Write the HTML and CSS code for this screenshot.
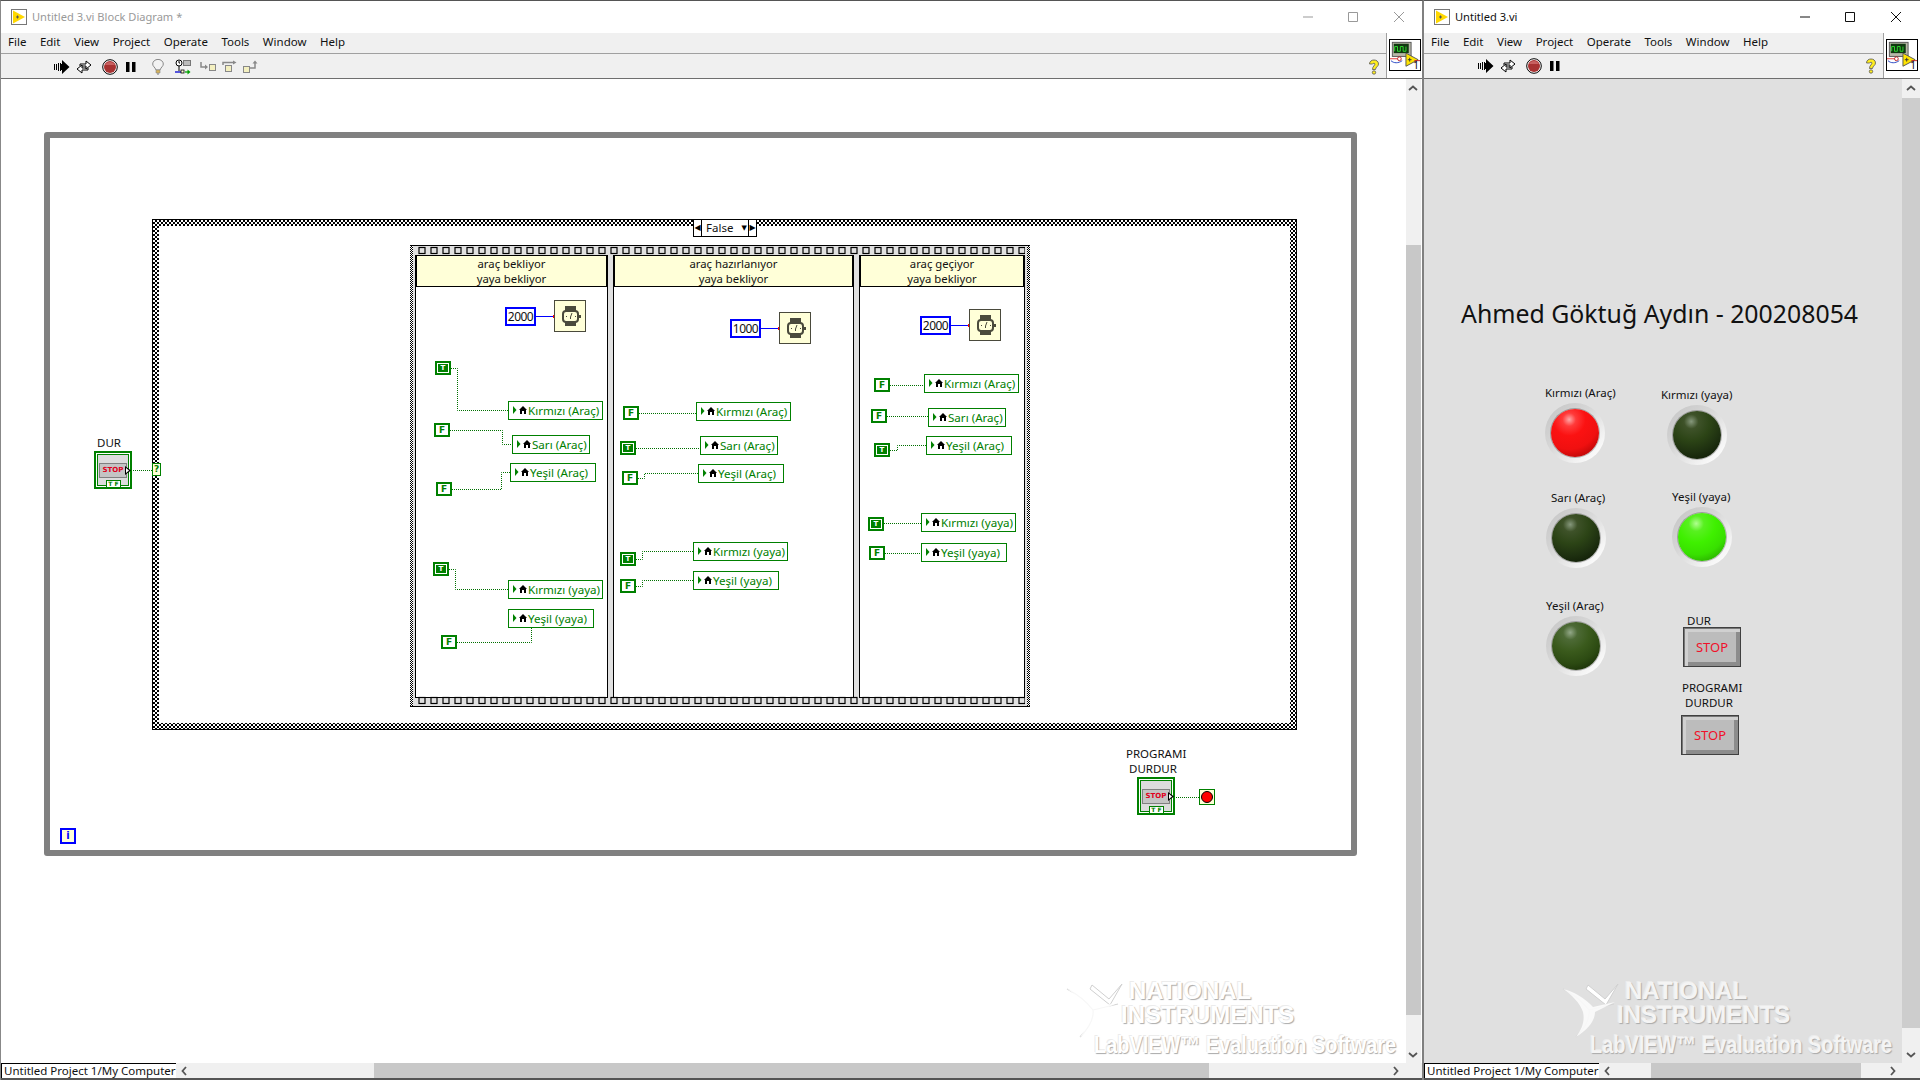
FILE: index.html
```html
<!DOCTYPE html>
<html lang="tr">
<head>
<meta charset="utf-8">
<title>Untitled 3.vi</title>
<link rel="stylesheet" href="styles.css">
</head>
<body>
<svg class="defs" width="0" height="0">
  <defs>
    <symbol id="vi" viewBox="0 0 16 16"><rect x=".5" y=".5" width="15" height="15" fill="#fff" stroke="#777"/><path d="M2 1.5v13l12-6.5z" fill="#ffd800"/><path d="M5 8h3M6.500 6.500v3" stroke="#555" fill="none"/></symbol>
    <symbol id="run" viewBox="0 0 16 16"><path d="M0 5h1v6H0zM2 5h1v6H2zM4 4h1v8H4zM6 4h1v8H6z" fill="#000"/><path d="M7 5h1V1l7.500 7L8 15v-4H7z" fill="#000"/></symbol>
    <symbol id="loop" viewBox="0 0 16 16"><path d="M4 7V5h6V2l5 4-5 4V7H6M12 9v2H6v3L1 10l5-4v3h4" fill="#fff" stroke="#000" stroke-width="1"/></symbol>
    <symbol id="abort" viewBox="0 0 16 16"><circle cx="8" cy="8" r="7.300" fill="#fff" stroke="#000"/><circle cx="8" cy="8" r="6" fill="#a83232"/><path d="M3 6a5.500 5 0 0 1 10 0z" fill="#c86060"/></symbol>
    <symbol id="pause" viewBox="0 0 10 12"><path d="M0 1h3.500v10H0zM6 1h3.500v10H6z" fill="#000"/></symbol>
    <symbol id="bulb" viewBox="0 0 12 16"><path d="M4 11C3 8 .7 7.500.7 5a5.300 4.600 0 0 1 10.600 0c0 2.500-2.300 3-3.300 6z" fill="#f2f2f2" stroke="#888"/><path d="M4 11h4v3H4z" fill="#d8b45a" stroke="#888" stroke-width=".6"/><path d="M5 15h2" stroke="#777"/></symbol>
    <symbol id="probe" viewBox="0 0 16 16"><circle cx="4" cy="4" r="3" fill="#fff" stroke="#000"/><path d="M4 2v2h1M4 7v5" stroke="#000" fill="none"/><rect x="8.500" y="1.500" width="7" height="5" fill="#bbb" stroke="#777"/><path d="M0 13h9" stroke="#0000d0" stroke-width="1.300"/><rect x="6" y="11" width="3" height="3" fill="#ffffd0" stroke="#000" stroke-width=".8"/><path d="M10 13h3" stroke="#00a000" stroke-width="1.300"/><path d="M12.500 10.500l3 2.500-3 2.500z" fill="#00a000"/></symbol>
    <symbol id="stepin" viewBox="0 0 16 14"><path d="M1 2v5h5" fill="none" stroke="#888" stroke-width="1.500"/><path d="M5 4.500l3 2.500-3 2.500z" fill="#888"/><rect x="9.500" y="4.500" width="6" height="6" fill="#f4f0c0" stroke="#888"/></symbol>
    <symbol id="stepover" viewBox="0 0 16 14"><rect x="3.500" y="5.500" width="6" height="6" fill="#f4f0c0" stroke="#888"/><path d="M1 5V2.500h10" fill="none" stroke="#888" stroke-width="1.500"/><path d="M11 .5l3.500 2-3.500 2z" fill="#888"/></symbol>
    <symbol id="stepout" viewBox="0 0 16 14"><rect x=".5" y="6.500" width="6" height="6" fill="#f4f0c0" stroke="#888"/><path d="M7 8h5V2" fill="none" stroke="#888" stroke-width="1.500"/><path d="M9.500 3.500L12 .5l2.500 3z" fill="#888"/></symbol>
    <symbol id="help" viewBox="0 0 12 16"><path d="M1.500 5C1.500 2 4 1 6 1s4.500 1 4.500 4c0 2.500-3 3-3 5.500h-3C4.500 7 7 6.500 7 5c0-1-2-1-2.300 0z" fill="#ffee20" stroke="#555" stroke-width=".8"/><circle cx="6" cy="13.500" r="1.700" fill="#ffee20" stroke="#555" stroke-width=".8"/></symbol>
    <symbol id="chev-up" viewBox="0 0 10 6"><path d="M1 5l4-3.500L9 5" fill="none" stroke="#555" stroke-width="1.800"/></symbol>
    <symbol id="chev-down" viewBox="0 0 10 6"><path d="M1 1l4 3.500L9 1" fill="none" stroke="#555" stroke-width="1.800"/></symbol>
    <symbol id="chev-left" viewBox="0 0 6 10"><path d="M5 1L1.500 5 5 9" fill="none" stroke="#555" stroke-width="1.800"/></symbol>
    <symbol id="chev-right" viewBox="0 0 6 10"><path d="M1 1l3.500 4L1 9" fill="none" stroke="#555" stroke-width="1.800"/></symbol>
    <symbol id="lvmark" viewBox="0 0 14 8"><path d="M0 0l3.500 4L0 8z" fill="#008000"/><path d="M10 0l4 4h-1v4h-2V5H9v3H7V4H6z" fill="#000"/></symbol>
    <symbol id="wait" viewBox="0 0 30 30"><path d="M10 5h11v6H10zM10 20h11v5H10z" fill="#4a4a3c"/><rect x="8" y="10" width="15" height="11" rx="3" fill="#ffffd8" stroke="#4a4a3c" stroke-width="2"/><path d="M24 14h2v3h-2z" fill="#4a4a3c"/><path d="M15.500 16l1.500-4M15.500 16v2M11 15.500h1M20 15.500h1" stroke="#4a4a3c"/></symbol>
    <symbol id="vicon" viewBox="0 0 32 32"><rect x="2.500" y="2.500" width="20" height="15" fill="#b8b8a8" stroke="#555"/><rect x="4" y="4" width="16" height="10" fill="#103810"/><path d="M5 12V7h3v5h3V7h3v5h3V7" fill="none" stroke="#30e030"/><path d="M0 20h10" stroke="#e03030"/><path d="M1 22c3 3 8 3 12 0" fill="none" stroke="#2040c0"/><circle cx="10" cy="20" r="2" fill="#fff" stroke="#c02020"/><path d="M17 14l13 7-13 7z" fill="#ffe400" stroke="#555"/><path d="M19 21h4M21 19v4" stroke="#333"/><path d="M26 22h6" stroke="#c02020"/></symbol>
    <symbol id="ni" viewBox="0 0 70 62"><path d="M3 6c10 5 19 12 26 21 1 9-4 18-13 27" fill="none" stroke="#d4d4d4" stroke-width="1.200"/><path d="M29 27l25-6" fill="none" stroke="#d4d4d4" stroke-width="1.200"/><path d="M28 2l17 14L58 1 46 22 26 6z" fill="#fff" stroke="#d0d0d0" stroke-width="1"/><path d="M3 6c10 2 22 9 30 18l22-5-20 10c0 8-6 17-19 25 6-8 9-16 7-25C20 20 12 12 3 6z" fill="#fff" fill-opacity=".8"/></symbol>
    <pattern id="film" width="12" height="10" patternUnits="userSpaceOnUse"><rect x="4" y="1.500" width="6" height="6" fill="none" stroke="#000" stroke-width="1.200"/></pattern>
  </defs>
</svg>

<div class="desktop">
  <div class="window win-diagram">
    <div class="titlebar">
      <svg class="app-icon"><use href="#vi"/></svg>
      <span class="title title-inactive">Untitled 3.vi Block Diagram *</span>
      <div class="controls controls-inactive">
        <svg class="ctl ctl-min" viewBox="0 0 12 12"><path d="M1 6h10"/></svg>
        <svg class="ctl ctl-max" viewBox="0 0 12 12"><path d="M1.500 1.500h9v9h-9z"/></svg>
        <svg class="ctl ctl-close" viewBox="0 0 12 12"><path d="M1 1l10 10M11 1L1 11"/></svg>
      </div>
    </div>
    <div class="head">
      <div class="bars">
        <div class="menubar"><span>File</span><span>Edit</span><span>View</span><span>Project</span><span>Operate</span><span>Tools</span><span>Window</span><span>Help</span></div>
        <div class="toolbar">
          <svg class="tb tb-run"><use href="#run"/></svg>
          <svg class="tb tb-loop"><use href="#loop"/></svg>
          <svg class="tb tb-abort"><use href="#abort"/></svg>
          <svg class="tb tb-pause"><use href="#pause"/></svg>
          <svg class="tb tb-bulb"><use href="#bulb"/></svg>
          <svg class="tb tb-probe"><use href="#probe"/></svg>
          <svg class="tb tb-step1"><use href="#stepin"/></svg>
          <svg class="tb tb-step2"><use href="#stepover"/></svg>
          <svg class="tb tb-step3"><use href="#stepout"/></svg>
          <svg class="tb tb-help"><use href="#help"/></svg>
        </div>
      </div>
      <div class="vi-cell"><div class="vi-box"><svg class="vi-pic"><use href="#vicon"/></svg><span class="vi-num">1</span></div></div>
    </div>
    <div class="main">
      <div class="canvas canvas-white">
        <div class="while"></div>
        <div class="case">
          <div class="case-in"></div>
        </div>
        <div class="selector"><span class="sel-arrow sel-l">&#9664;</span><span class="sel-text">False</span><span class="sel-drop">&#9660;</span><span class="sel-arrow sel-r">&#9654;</span></div>

        <div class="seq">
          <svg class="film film-top"><rect width="100%" height="100%" fill="url(#film)"/></svg>
          <svg class="film film-bottom"><rect width="100%" height="100%" fill="url(#film)"/></svg>
          <div class="frame frame-1"><div class="frame-head">araç bekliyor<br>yaya bekliyor</div></div>
          <div class="frame frame-2"><div class="frame-head">araç hazırlanıyor<br>yaya bekliyor</div></div>
          <div class="frame frame-3"><div class="frame-head">araç geçiyor<br>yaya bekliyor</div></div>
        </div>

        <svg class="wires" width="1424" height="1080">
          <g class="w-bool">
            <path d="M451 368.500h6.500v42H508M450 430.500h52.500v14h9.500M452 489.500h49.500v-17h8.500M449 569.500h6.500v20H508M457 642.500h74.500V628"/>
            <path d="M639 413.500h57M636 448.500h64M638 478.500h6.500v-5H698M636 559.500h6.500v-8H693M636 586.500h6.500v-6H693"/>
            <path d="M890 385.500h34M887 416.500h41M890 450.500h7.500v-5H926M884 523.500h37M885 553.500h36"/>
            <path d="M131 470.500h21M1174 797.500h25"/>
          </g>
          <g class="w-num">
            <path d="M536 316.500h18M761 328.500h18M951 325.500h18"/>
          </g>
          <g class="w-dot">
            <path d="M553 315h3v3h-3zM778 327h3v3h-3zM968 324h3v3h-3z"/>
          </g>
        </svg>

        <div class="num c-a">2000</div>
        <div class="wait w-a"><svg class="wait-pic"><use href="#wait"/></svg></div>
        <div class="bool bt b1">T</div>
        <div class="bool bf b2">F</div>
        <div class="bool bf b3">F</div>
        <div class="bool bt b4">T</div>
        <div class="bool bf b5">F</div>
        <div class="lv lw95 l1"><svg class="mark"><use href="#lvmark"/></svg><span>Kırmızı (Araç)</span></div>
        <div class="lv lw78 l2"><svg class="mark"><use href="#lvmark"/></svg><span>Sarı (Araç)</span></div>
        <div class="lv lw86 l3"><svg class="mark"><use href="#lvmark"/></svg><span>Yeşil (Araç)</span></div>
        <div class="lv lw95 l4"><svg class="mark"><use href="#lvmark"/></svg><span>Kırmızı (yaya)</span></div>
        <div class="lv lw86 l5"><svg class="mark"><use href="#lvmark"/></svg><span>Yeşil (yaya)</span></div>

        <div class="num c-b">1000</div>
        <div class="wait w-b"><svg class="wait-pic"><use href="#wait"/></svg></div>
        <div class="bool bf b6">F</div>
        <div class="bool bt b7">T</div>
        <div class="bool bf b8">F</div>
        <div class="bool bt b9">T</div>
        <div class="bool bf b10">F</div>
        <div class="lv lw95 l6"><svg class="mark"><use href="#lvmark"/></svg><span>Kırmızı (Araç)</span></div>
        <div class="lv lw78 l7"><svg class="mark"><use href="#lvmark"/></svg><span>Sarı (Araç)</span></div>
        <div class="lv lw86 l8"><svg class="mark"><use href="#lvmark"/></svg><span>Yeşil (Araç)</span></div>
        <div class="lv lw95 l9"><svg class="mark"><use href="#lvmark"/></svg><span>Kırmızı (yaya)</span></div>
        <div class="lv lw86 l10"><svg class="mark"><use href="#lvmark"/></svg><span>Yeşil (yaya)</span></div>

        <div class="num c-c">2000</div>
        <div class="wait w-c"><svg class="wait-pic"><use href="#wait"/></svg></div>
        <div class="bool bf b11">F</div>
        <div class="bool bf b12">F</div>
        <div class="bool bt b13">T</div>
        <div class="bool bt b14">T</div>
        <div class="bool bf b15">F</div>
        <div class="lv lw95 l11"><svg class="mark"><use href="#lvmark"/></svg><span>Kırmızı (Araç)</span></div>
        <div class="lv lw78 l12"><svg class="mark"><use href="#lvmark"/></svg><span>Sarı (Araç)</span></div>
        <div class="lv lw86 l13"><svg class="mark"><use href="#lvmark"/></svg><span>Yeşil (Araç)</span></div>
        <div class="lv lw95 l14"><svg class="mark"><use href="#lvmark"/></svg><span>Kırmızı (yaya)</span></div>
        <div class="lv lw86 l15"><svg class="mark"><use href="#lvmark"/></svg><span>Yeşil (yaya)</span></div>

        <div class="lbl lb-dur">DUR</div>
        <div class="term t-dur"><div class="term-stop">STOP</div><div class="term-tf">T F</div><div class="term-out"></div></div>
        <div class="cond">?</div>

        <div class="lbl lb-prog1">PROGRAMI</div>
        <div class="lbl lb-prog2">DURDUR</div>
        <div class="term t-prog"><div class="term-stop">STOP</div><div class="term-tf">T F</div><div class="term-out"></div></div>
        <div class="stopterm"><div class="stopdot"></div></div>
        <div class="iterm">i</div>

        <div class="wm wm-left">
          <svg class="wm-logo"><use href="#ni"/></svg>
          <div class="wm-t wm-1">NATIONAL</div>
          <div class="wm-t wm-2">INSTRUMENTS</div>
          <div class="wm-t wm-3">LabVIEW&#8482; Evaluation Software</div>
        </div>
      </div>
      <div class="vscroll">
        <svg class="chev chev-top"><use href="#chev-up"/></svg>
        <div class="vspace vspace-l"></div>
        <div class="vthumb vthumb-l"></div>
        <div class="vfill"></div>
        <svg class="chev chev-bottom"><use href="#chev-down"/></svg>
      </div>
    </div>
    <div class="status">
      <div class="tab">Untitled Project 1/My Computer</div>
      <svg class="hchev hchev-l"><use href="#chev-left"/></svg>
      <div class="hthumb hthumb-l"></div>
      <div class="vfill"></div>
      <svg class="hchev hchev-r"><use href="#chev-right"/></svg>
    </div>
  </div>

  <div class="window win-panel">
    <div class="titlebar">
      <svg class="app-icon"><use href="#vi"/></svg>
      <span class="title">Untitled 3.vi</span>
      <div class="controls">
        <svg class="ctl ctl-min" viewBox="0 0 12 12"><path d="M1 6h10"/></svg>
        <svg class="ctl ctl-max" viewBox="0 0 12 12"><path d="M1.500 1.500h9v9h-9z"/></svg>
        <svg class="ctl ctl-close" viewBox="0 0 12 12"><path d="M1 1l10 10M11 1L1 11"/></svg>
      </div>
    </div>
    <div class="head">
      <div class="bars">
        <div class="menubar"><span>File</span><span>Edit</span><span>View</span><span>Project</span><span>Operate</span><span>Tools</span><span>Window</span><span>Help</span></div>
        <div class="toolbar">
          <svg class="tb tb-run"><use href="#run"/></svg>
          <svg class="tb tb-loop"><use href="#loop"/></svg>
          <svg class="tb tb-abort"><use href="#abort"/></svg>
          <svg class="tb tb-pause"><use href="#pause"/></svg>
          <svg class="tb tb-help"><use href="#help"/></svg>
        </div>
      </div>
      <div class="vi-cell"><div class="vi-box"><svg class="vi-pic"><use href="#vicon"/></svg><span class="vi-num">1</span></div></div>
    </div>
    <div class="main">
      <div class="canvas canvas-gray">
        <h1 class="heading">Ahmed Göktuğ Aydın - 200208054</h1>
        <div class="lbl pl1">Kırmızı (Araç)</div><div class="led led-red p-l1"><div class="lamp lamp-red"></div></div>
        <div class="lbl pl2">Kırmızı (yaya)</div><div class="led p-l2"><div class="lamp lamp-dark"></div></div>
        <div class="lbl pl3">Sarı (Araç)</div><div class="led p-l3"><div class="lamp lamp-dark"></div></div>
        <div class="lbl pl4">Yeşil (yaya)</div><div class="led p-l4"><div class="lamp lamp-green"></div></div>
        <div class="lbl pl5">Yeşil (Araç)</div><div class="led p-l5"><div class="lamp lamp-dim"></div></div>
        <div class="lbl pl6">DUR</div><div class="btn btn-1">STOP</div>
        <div class="lbl pl7">PROGRAMI</div><div class="lbl pl8">DURDUR</div><div class="btn btn-2">STOP</div>
        <div class="wm wm-right">
          <svg class="wm-logo"><use href="#ni"/></svg>
          <div class="wm-t wm-1">NATIONAL</div>
          <div class="wm-t wm-2">INSTRUMENTS</div>
          <div class="wm-t wm-3">LabVIEW&#8482; Evaluation Software</div>
        </div>
      </div>
      <div class="vscroll vscroll-r">
        <svg class="chev chev-top"><use href="#chev-up"/></svg>
        <div class="vspace vspace-r"></div>
        <div class="vthumb vthumb-r"></div>
        <div class="vfill"></div>
        <svg class="chev chev-bottom"><use href="#chev-down"/></svg>
      </div>
    </div>
    <div class="status">
      <div class="tab">Untitled Project 1/My Computer</div>
      <svg class="hchev hchev-l"><use href="#chev-left"/></svg>
      <div class="hthumb hthumb-r"></div>
      <div class="vfill"></div>
      <svg class="hchev hchev-r2"><use href="#chev-right"/></svg>
    </div>
  </div>
</div>
</body>
</html>
```

FILE: styles.css
```css
* { box-sizing: border-box; }
html, body { margin: 0; height: 100%; overflow: hidden; }
body { font-family: "Noto Sans", "Open Sans", sans-serif; font-size: 12px; color: #111; background: #fff; }
.defs { position: absolute; }
.desktop { display: flex; width: 1920px; height: 1080px; }

.window { position: relative; display: flex; flex-direction: column; height: 1080px; background: #fff; border-top: 1px solid #555; overflow: hidden; }
.win-diagram { width: 1424px; border-left: 1px solid #888; border-right: 2px solid #808080; }
.win-panel { width: 496px; }

.titlebar { display: flex; align-items: center; height: 32px; flex: none; background: #fff; padding-left: 10px; }
.app-icon { width: 16px; height: 16px; margin-right: 5px; }
.title { font-size: 11.100px; margin-top: -1px; }
.title-inactive { color: #999; }
.controls { margin-left: auto; display: flex; align-items: center; padding-right: 18px; }
.ctl { width: 12px; height: 12px; fill: none; stroke: #111; stroke-width: 1; }
.ctl-max { margin-left: 33px; }
.ctl-close { margin-left: 34px; }
.controls-inactive .ctl { stroke: #999; }
.controls-inactive { padding-right: 17px; }

.head { display: flex; flex: none; height: 46px; border-bottom: 1px solid #6e6e6e; background: #f0f0f0; }
.bars { flex: 1; display: flex; flex-direction: column; border-right: 1px solid #a0a0a0; }
.menubar { display: flex; align-items: center; gap: 13.500px; height: 21px; padding: 0 0 4px 7px; background: #f0f0f0; border-bottom: 1px solid #a0a0a0; font-size: 11.500px; color: #111; }
.toolbar { flex: 1; display: flex; align-items: center; padding: 1px 0 0 53px; background: #f0f0f0; }
.win-panel .toolbar { padding: 0 0 0 54px; }
.tb { width: 16px; height: 16px; flex: none; }
.tb-loop { margin-left: 6px; }
.tb-abort { margin-left: 10px; }
.tb-pause { margin-left: 8px; width: 10px; height: 12px; }
.tb-bulb { margin-left: 16px; width: 12px; }
.tb-probe { margin-left: 11px; }
.tb-step1 { margin-left: 9px; }
.tb-step2 { margin-left: 6px; }
.tb-step3 { margin-left: 5px; }
.tb-help { margin-left: auto; margin-right: 6px; width: 12px; }
.vi-cell { flex: none; width: 35px; background: #fff; padding: 6px 1px 0 2px; }
.win-panel .vi-cell { width: 36px; padding: 6px 2px 0 2px; }
.vi-box { position: relative; width: 32px; height: 32px; border: 1px solid #000; background: #fff; }
.vi-pic { display: block; width: 30px; height: 30px; }
.vi-num { position: absolute; right: 1px; bottom: -1px; font-size: 10px; line-height: 12px; color: #000; }

.main { flex: 1; display: flex; min-height: 0; }
.canvas { flex: 1; }
.canvas-white { background: #fff; }
.canvas-gray { background: #e0e0e0; }
.vscroll { flex: none; width: 15px; margin-right: 1px; display: flex; flex-direction: column; background: #f0f0f0; position: relative; }
.vscroll-r { width: 18px; margin-right: 0; }
.chev { position: absolute; left: 2px; width: 10px; height: 6px; }
.vscroll-r .chev { left: 4px; }
.chev-top { top: 6px; }
.chev-bottom { bottom: 5px; }
.vspace-l { height: 166px; flex: none; }
.vthumb-l { height: 770px; flex: none; background: #c8c8c8; }
.vspace-r { height: 19px; flex: none; }
.vthumb-r { height: 930px; flex: none; background: #cdcdcd; }
.vfill { flex: 1; }

.status { flex: none; height: 17px; display: flex; align-items: stretch; background: #f0f0f0; border-bottom: 2px solid #555; }
.tab { width: 175px; flex: none; background: #fff; border-top: 1px solid #000; border-left: 1px solid #000; font-size: 11.500px; line-height: 14px; padding-left: 2px; white-space: nowrap; overflow: hidden; color: #111; }
.hchev { width: 6px; height: 10px; flex: none; align-self: center; }
.hchev-l { margin-left: 5px; }
.hthumb { flex: none; background: #c8c8c8; }
.hthumb-l { margin-left: 187px; width: 835px; }
.hthumb-r { margin-left: 41px; width: 210px; }
.hchev-r { margin-right: 23px; }
.hchev-r2 { margin-right: 24px; }

/* diagram: nodes on a free canvas, offsets measured from the window corner */
.while { position: absolute; left: 43px; top: 131px; width: 1313px; height: 724px; border: 6px solid #808080; border-radius: 3px; }
.case { position: absolute; left: 151px; top: 218px; width: 1145px; height: 511px; padding: 6px; border: 1px solid #000; background: repeating-conic-gradient(#000 0 25%, #fff 0 50%) 0 0 / 4px 4px; }
.case-in { width: 100%; height: 100%; background: #fff; }
.selector { position: absolute; left: 692px; top: 218px; width: 64px; height: 18px; display: flex; align-items: center; background: #fff; border: 1px solid #000; font-size: 11.500px; }
.sel-arrow { width: 8px; height: 100%; font-size: 8px; line-height: 15px; text-align: center; color: #000; font-family: "DejaVu Sans", sans-serif; flex: none; }
.sel-l { border-right: 1px solid #000; }
.sel-r { border-left: 1px solid #000; }
.sel-text { margin: -2px 0 0 4px; color: #111; }
.sel-drop { margin-left: auto; margin-right: 1px; font-size: 7px; font-family: "DejaVu Sans", sans-serif; color: #000; }
.seq { position: absolute; left: 409px; top: 244px; width: 620px; height: 462px; display: flex; gap: 5px; padding: 9px 5px 8px 5px; background: #e0e0e0; border-top: 1px solid #000; border-bottom: 1px solid #000; }
.seq::before, .seq::after { content: ""; position: absolute; top: 0; bottom: 0; width: 3px; background: repeating-conic-gradient(#000 0 25%, #fff 0 50%) 0 0 / 2px 2px; }
.seq::before { left: 0; }
.seq::after { right: 0; }
.film { position: absolute; left: 5px; height: 10px; width: 610px; }
.film-top { top: 0; }
.film-bottom { bottom: 0; }
.frame { background: #fff; border: 1px solid #000; display: flex; flex-direction: column; }
.frame-1 { width: 193px; }
.frame-2 { width: 241px; }
.frame-3 { width: 166px; }
.frame-head { height: 31px; flex: none; background: #ffffd8; border: 1px solid #000; border-top: 0; text-align: center; font-size: 11.300px; line-height: 15px; color: #111; }

.wires { position: absolute; left: -1px; top: -1px; pointer-events: none; overflow: visible; }
.w-bool path { fill: none; stroke: #007000; stroke-width: 1; stroke-dasharray: 1 1; }
.w-num path { fill: none; stroke: #0000ff; stroke-width: 1; }
.w-dot path { fill: #ff0000; }

.num { position: absolute; width: 31px; height: 19px; border: 2px solid #0000ff; background: #fff; font-size: 12px; line-height: 15px; text-align: center; letter-spacing: -.5px; color: #111; }
.c-a { left: 504px; top: 306px; } .c-b { left: 729px; top: 318px; } .c-c { left: 919px; top: 315px; }
.wait { position: absolute; width: 32px; height: 32px; border: 1px solid #4a4a3c; background: #ffffd8; }
.wait-pic { display: block; width: 30px; height: 30px; }
.w-a { left: 553px; top: 299px; } .w-b { left: 778px; top: 311px; } .w-c { left: 968px; top: 308px; }

.bool { position: absolute; width: 16px; height: 14px; border: 2px solid #008000; font-family: "DejaVu Sans", sans-serif; font-weight: 700; font-size: 9px; line-height: 10px; text-align: center; }
.bt { background: #008000; color: #fff; font-size: 7px; box-shadow: inset 0 0 0 1px #fff; }
.bf { background: #fff; color: #008000; }
.b1 { left: 434px; top: 360px; } .b2 { left: 433px; top: 422px; } .b3 { left: 435px; top: 481px; } .b4 { left: 432px; top: 561px; } .b5 { left: 440px; top: 634px; }
.b6 { left: 622px; top: 405px; } .b7 { left: 619px; top: 440px; } .b8 { left: 621px; top: 470px; } .b9 { left: 619px; top: 551px; } .b10 { left: 619px; top: 578px; }
.b11 { left: 873px; top: 377px; } .b12 { left: 870px; top: 408px; } .b13 { left: 873px; top: 442px; } .b14 { left: 867px; top: 516px; } .b15 { left: 868px; top: 545px; }

.lv { position: absolute; height: 19px; display: flex; align-items: center; gap: 1px; padding-left: 4px; background: #fff; border: 1px solid #008000; color: #008000; font-size: 11.600px; white-space: nowrap; }
.mark { width: 14px; height: 8px; flex: none; margin-top: -2px; }
.lw95 { width: 95px; } .lw78 { width: 78px; } .lw86 { width: 86px; }
.l1 { left: 507px; top: 400px; } .l2 { left: 511px; top: 434px; } .l3 { left: 509px; top: 462px; } .l4 { left: 507px; top: 579px; } .l5 { left: 507px; top: 608px; }
.l6 { left: 695px; top: 401px; } .l7 { left: 699px; top: 435px; } .l8 { left: 697px; top: 463px; } .l9 { left: 692px; top: 541px; } .l10 { left: 692px; top: 570px; }
.l11 { left: 923px; top: 373px; } .l12 { left: 927px; top: 407px; } .l13 { left: 925px; top: 435px; } .l14 { left: 920px; top: 512px; } .l15 { left: 920px; top: 542px; }

.lbl { position: absolute; font-size: 11.500px; line-height: 16px; white-space: nowrap; color: #111; }
.lb-dur { left: 96px; top: 434px; }
.lb-prog1 { left: 1125px; top: 745px; }
.lb-prog2 { left: 1128px; top: 760px; }

.term { position: absolute; width: 38px; height: 38px; border: 2px solid #008000; background: #dcdcdc; box-shadow: inset 0 0 0 1px #fff, inset 0 0 0 2px #008000; }
.t-dur { left: 93px; top: 450px; }
.t-prog { left: 1136px; top: 776px; }
.term-stop { position: absolute; left: 3px; top: 10px; width: 28px; height: 15px; background: #c4c4c4; border: 1px solid #808080; font-family: "DejaVu Sans", sans-serif; font-weight: 700; font-size: 7px; line-height: 13px; text-align: center; color: #e00020; }
.term-tf { position: absolute; left: 10px; bottom: -1px; width: 15px; height: 8px; background: #fff; border: 1px solid #008000; font-family: "DejaVu Sans", sans-serif; font-weight: 700; font-size: 6px; line-height: 6px; text-align: center; color: #008000; }
.term-out { position: absolute; right: -1px; top: 13px; width: 6px; height: 9px; background: #000; clip-path: polygon(0 0, 100% 50%, 0 100%); }
.term-out::after { content: ""; position: absolute; left: 1px; top: 2px; width: 3px; height: 5px; background: #fff; clip-path: polygon(0 0, 100% 50%, 0 100%); }
.cond { position: absolute; left: 151px; top: 462px; width: 9px; height: 13px; border: 1px solid #008000; background: #ffffd8; font-family: "DejaVu Sans", sans-serif; font-weight: 700; font-size: 9px; line-height: 11px; text-align: center; color: #008000; }
.stopterm { position: absolute; left: 1198px; top: 788px; width: 16px; height: 16px; border: 1px solid #008000; background: #ffffd8; padding: 1px; }
.stopdot { width: 12px; height: 12px; border-radius: 50%; background: #ff0000; border: 1.500px solid #000; }
.iterm { position: absolute; left: 59px; top: 827px; width: 16px; height: 16px; border: 2px solid #0000ff; background: #ffffd8; font-family: "DejaVu Sans", sans-serif; font-weight: 700; font-size: 10px; line-height: 12px; text-align: center; color: #0000ff; }

/* watermark */
.wm { position: absolute; top: 975px; width: 345px; height: 85px; pointer-events: none; }
.wm-left { left: 1059px; }
.wm-right { left: 132px; }
.wm-logo { position: absolute; left: 4px; top: 7px; width: 70px; height: 62px; }
.wm-t { position: absolute; font-family: "Liberation Sans", sans-serif; font-weight: 700; color: #fff; white-space: nowrap; text-shadow: 1px 1px 1px #aaa, -1px -1px 0 #ececec; }
.wm-right .wm-t { color: #f4f4f4; }
.wm-1 { left: 69px; top: 5px; font-size: 24px; line-height: 20px; }
.wm-2 { left: 61px; top: 29px; font-size: 24px; line-height: 20px; }
.wm-3 { left: 34px; top: 56px; font-size: 23px; line-height: 26px; transform: scaleX(.866); transform-origin: 0 50%; }

/* front panel */
.heading { position: absolute; left: 37px; top: 295px; margin: 0; font-size: 24.850px; line-height: 34px; font-weight: 400; white-space: nowrap; color: #111; }
.led { position: absolute; width: 60px; height: 60px; border-radius: 50%; padding: 6px; background: linear-gradient(135deg, #c4c4c4 0%, #d6d6d6 40%, #fafafa 85%); }
.lamp { width: 48px; height: 48px; border-radius: 50%; box-shadow: 0 0 0 1px rgba(0,0,0,.25); }
.lamp-red { background: radial-gradient(circle at 38% 22%, #ffa8a8 0, #ff3a3a 14%, #fb1212 34%, #f01010 62%, #c00808 82%, #700000 100%); }
.lamp-dark { background: radial-gradient(circle at 38% 22%, #86987c 0, #3e5229 15%, #2c4416 40%, #1e3010 65%, #0e1a05 90%, #0a1204 100%); }
.lamp-dim { background: radial-gradient(circle at 38% 22%, #93a888 0, #4d6a36 15%, #3a5a1c 40%, #2c4a12 65%, #162a06 90%, #0c1804 100%); }
.lamp-green { background: radial-gradient(circle at 38% 22%, #b0ff90 0, #58f020 16%, #3ff000 40%, #38e000 65%, #28a800 88%, #186800 100%); }
.p-l1 { left: 121px; top: 402px; } .p-l2 { left: 243px; top: 404px; } .p-l3 { left: 122px; top: 507px; } .p-l4 { left: 248px; top: 506px; } .p-l5 { left: 122px; top: 615px; }
.pl1 { left: 121px; top: 384px; } .pl2 { left: 237px; top: 386px; } .pl3 { left: 127px; top: 489px; } .pl4 { left: 248px; top: 488px; } .pl5 { left: 122px; top: 597px; }
.pl6 { left: 263px; top: 612px; } .pl7 { left: 258px; top: 679px; } .pl8 { left: 261px; top: 694px; }
.btn { position: absolute; width: 58px; height: 40px; display: flex; align-items: center; justify-content: center; font-size: 13px; color: #f0102a; background: #bcbcbc; border: 1px solid #404040; box-shadow: inset 1px 1px 0 #777, inset 5px 5px 0 -1px #d0d0d0, inset -5px -5px 0 -1px #8c8c8c; }
.btn-1 { left: 259px; top: 626px; }
.btn-2 { left: 257px; top: 714px; }
```
